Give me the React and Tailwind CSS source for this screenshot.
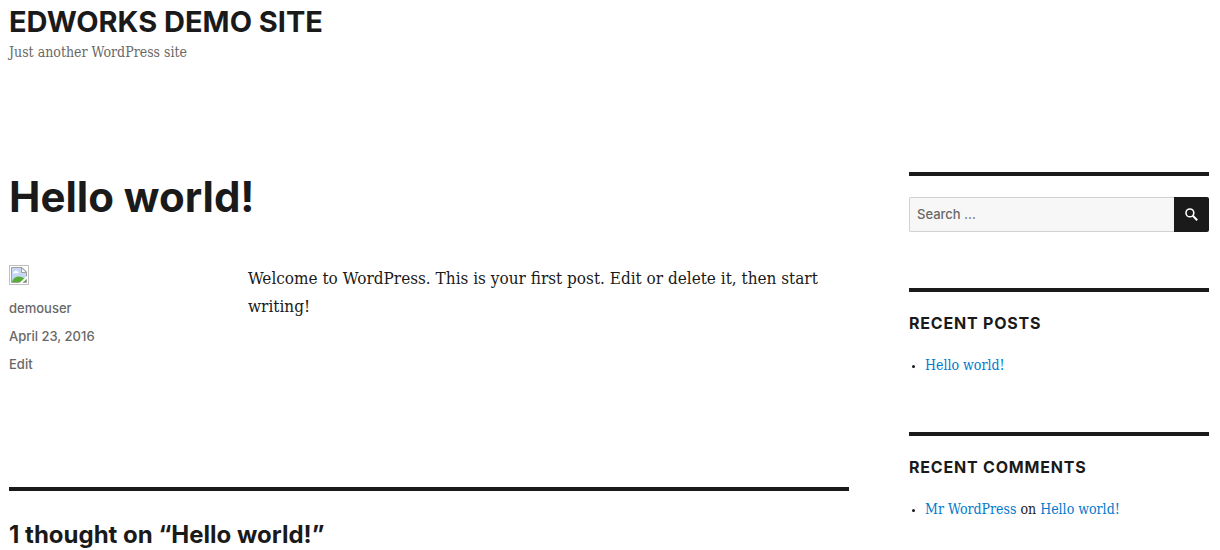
import React from 'react';

const SERIF = "font-['DejaVu_Serif_Condensed','DejaVu_Serif',serif]";

function BrokenImage() {
  return (
    <svg role="img" aria-label="demouser" viewBox="0 0 20 20" className="block size-5">
      <rect x="0.5" y="0.5" width="19" height="19" fill="#fff" stroke="#c0c0c0" />
      <path d="M2.5 2.5H13L17.5 7V17.5H2.5Z" fill="#c6d7f5" />
      <path d="M4 8.2C4 6.8 5 6.4 5.6 6.5C6 5.2 8 5.1 8.3 6.4C9.4 6.3 9.8 7.4 9.4 8.2Z" fill="#fff" />
      <path d="M3 17C3.6 14.4 6.2 11.6 9.4 11.6C12.2 11.6 15.6 13.2 17 15V17Z" fill="#58ad35" />
      <path d="M2.5 2.5H13L17.5 7V17.5H2.5Z" fill="none" stroke="#a0a0a0" />
      <path d="M12.5 2.5V7.5H17.5Z" fill="#f6f6f6" stroke="#a0a0a0" />
      <path d="M10 18.2L18.2 10.8V13.4L13 18.2Z" fill="#fff" />
    </svg>
  );
}

function SearchIcon() {
  return (
    <svg aria-hidden="true" viewBox="0 0 13 13" fill="none" stroke="#fff" className="size-[13px]">
      <circle cx="4.9" cy="4.9" r="3.9" strokeWidth="1.6" />
      <path d="M7.8 7.8L12.2 12.2" strokeWidth="2" />
    </svg>
  );
}

function Widget({ title, children }) {
  return (
    <section className="border-t-4 border-[#1a1a1a] pt-[21px]">
      {title && (
        <h2 className="mb-[22px] text-base leading-5 font-bold tracking-wider uppercase">{title}</h2>
      )}
      {children}
    </section>
  );
}

function WidgetList({ children }) {
  return <ul className={`${SERIF} list-disc pl-4 text-sm leading-[21px] marker:text-[10px]`}>{children}</ul>;
}

export default function App() {
  return (
    <div className="bg-white pt-1 pr-[11px] pl-[9px] font-['Inter',sans-serif] text-[#1a1a1a]">
      <header className="mb-[110px]">
        <p className="text-[29px] leading-9 font-bold uppercase">
          <a href="#home">Edworks Demo Site</a>
        </p>
        <p className={`${SERIF} mt-0.5 text-sm leading-5 text-[#686868]`}>Just another WordPress site</p>
      </header>

      <div className="flex items-start gap-[60px]">
        <main className="min-w-0 flex-1">
          <article className="pt-px">
            <h1 className="mb-[43px] text-[42px] leading-[48px] font-bold">Hello world!</h1>
            <div className="flex">
              <footer className="flex w-[239px] shrink-0 flex-col items-start text-[13px] leading-7 font-medium text-[#686868]">
                <div className="mt-px mb-[9px]">
                  <BrokenImage />
                </div>
                <a href="#demouser">demouser</a>
                <a href="#date"><time dateTime="2016-04-23">April 23, 2016</time></a>
                <a href="#edit">Edit</a>
              </footer>
              <p className={`${SERIF} text-[17px] leading-7`}>
                Welcome to WordPress. This is your first post. Edit or delete it, then start writing!
              </p>
            </div>
          </article>
          <section className="mt-[109px] border-t-4 border-[#1a1a1a] pt-7">
            <h2 className="text-2xl leading-8 font-bold">1 thought on “Hello world!”</h2>
          </section>
        </main>

        <aside className="flex w-1/4 shrink-0 flex-col gap-14">
          <Widget>
            <form className="flex h-[35px]" onSubmit={(e) => e.preventDefault()}>
              <input
                type="search"
                aria-label="Search for:"
                placeholder="Search …"
                className="min-w-0 flex-1 rounded-l-xs border border-r-0 border-[#d1d1d1] bg-[#f7f7f7] px-[7px] text-[13px] font-medium outline-none placeholder:text-[#686868]"
              />
              <button type="submit" aria-label="Search" className="flex w-[35px] items-center justify-center rounded-r-xs bg-[#1a1a1a]">
                <SearchIcon />
              </button>
            </form>
          </Widget>
          <Widget title="Recent Posts">
            <WidgetList>
              <li><a href="#hello-world" className="text-[#007acc]">Hello world!</a></li>
            </WidgetList>
          </Widget>
          <Widget title="Recent Comments">
            <WidgetList>
              <li>
                <a href="#mr-wordpress" className="text-[#007acc]">Mr WordPress</a> on{' '}
                <a href="#comment" className="text-[#007acc]">Hello world!</a>
              </li>
            </WidgetList>
          </Widget>
        </aside>
      </div>
    </div>
  );
}
